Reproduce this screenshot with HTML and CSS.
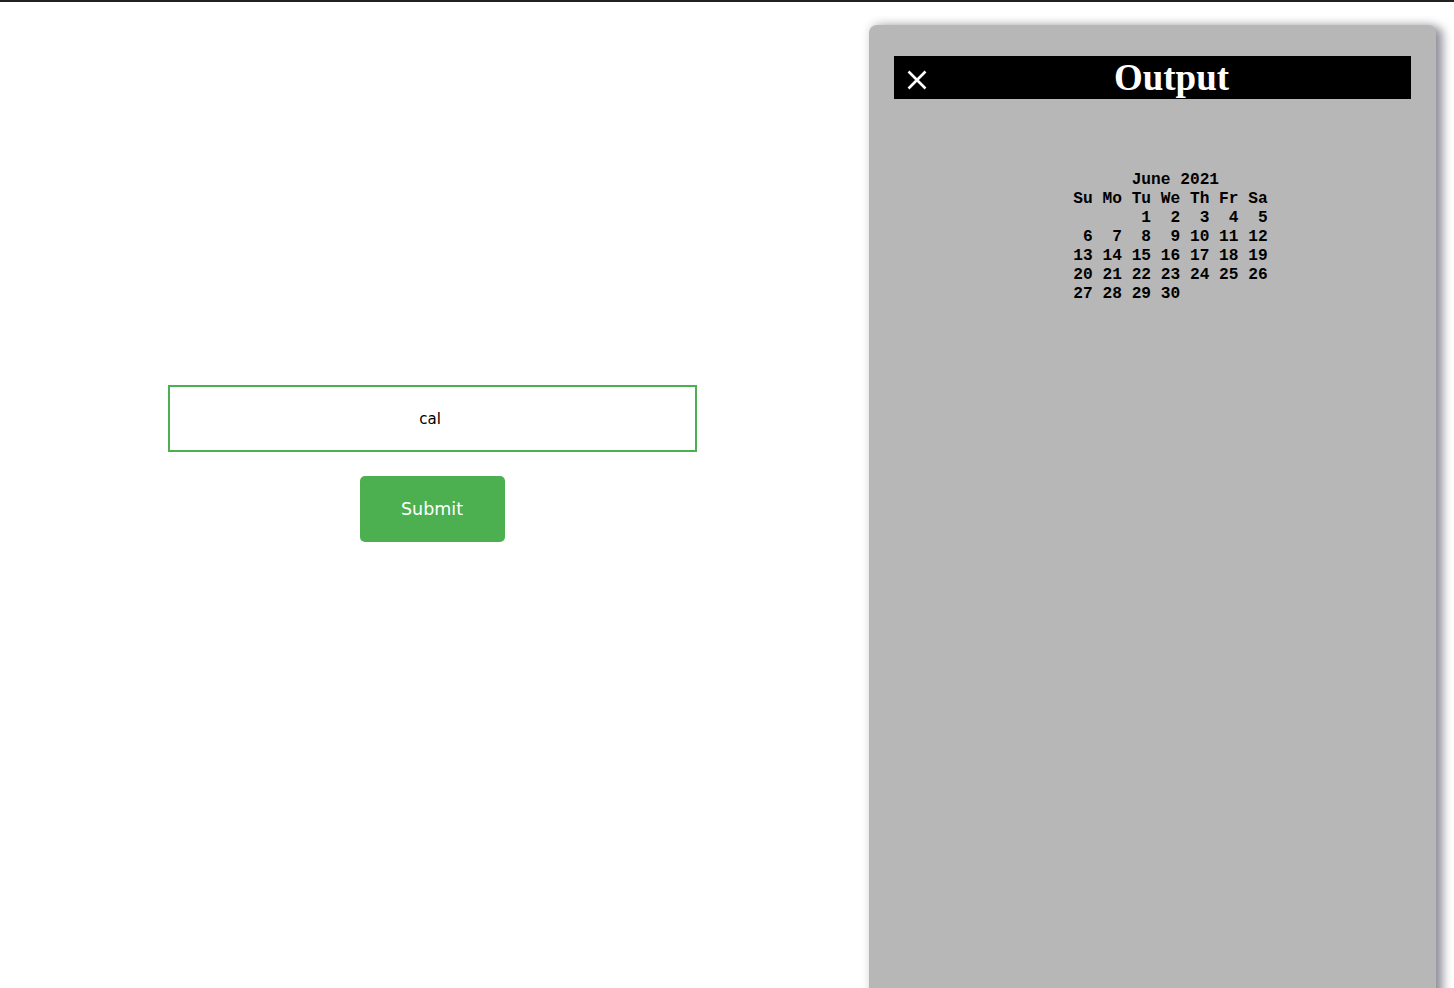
FILE: index.html
```
<!DOCTYPE html>
<html>
<head>
<meta charset="utf-8">
<link rel="stylesheet" href="styles.css">
</head>
<body>
<div class="topline"></div>
<div class="page">
  <div class="left">
    <form class="form">
      <input class="cmd" type="text" value="cal">
      <button class="submit" type="button">Submit</button>
    </form>
  </div>
  <div class="panel">
    <div class="bar">
      <span class="close"><svg width="20" height="20" viewBox="0 0 20 20"><path d="M1.5 1.5 L18.5 18.5 M18.5 1.5 L1.5 18.5" stroke="#fff" stroke-width="2.6" stroke-linecap="butt"/></svg></span>
      <h1 class="title">Output</h1>
    </div>
    <div class="output">
<pre class="cal">      June 2021
Su Mo Tu We Th Fr Sa
       1  2  3  4  5
 6  7  8  9 10 11 12
13 14 15 16 17 18 19
20 21 22 23 24 25 26
27 28 29 30</pre>
    </div>
  </div>
</div>
</body>
</html>
```
FILE: styles.css
```
html, body {
  margin: 0;
  padding: 0;
  background: #fff;
  overflow: hidden;
  height: 988px;
}
.topline {
  height: 2px;
  background: #222;
}
.page {
  display: flex;
  align-items: flex-start;
}
.left {
  flex: 0 0 864px;
  padding-top: 383px;
}
.form {
  display: flex;
  flex-direction: column;
  align-items: center;
  gap: 24px;
  margin: 0;
}
.cmd {
  box-sizing: border-box;
  width: 529px;
  height: 67px;
  border: 2px solid #4caf50;
  outline: none;
  text-align: center;
  font-family: "DejaVu Sans", sans-serif;
  font-size: 15px;
  color: #000;
  padding: 0 10px 0 6px;
  margin: 0;
  background: #fff;
}
.submit {
  width: 145px;
  height: 66px;
  background: #4caf50;
  color: #fff;
  border: none;
  border-radius: 5px;
  font-family: "DejaVu Sans", sans-serif;
  font-size: 17.5px;
  padding: 0;
}
.panel {
  flex: 0 0 567px;
  box-sizing: border-box;
  margin-left: 5px;
  margin-top: 23px;
  height: 1000px;
  background: #b7b7b7;
  border-radius: 8px;
  padding: 31px 25px 0 25px;
  box-shadow: 7px 2px 10px rgba(70, 70, 90, 0.55), 0 -2px 10px rgba(0, 0, 0, 0.12);
}
.bar {
  display: flex;
  align-items: center;
  height: 43px;
  background: #000;
}
.close {
  flex: 0 0 38px;
  box-sizing: border-box;
  display: flex;
  justify-content: flex-start;
  padding-left: 13px;
  padding-top: 4px;
}
.close svg {
  display: block;
}
.title {
  flex: 1;
  margin: 0;
  text-align: center;
  color: #fff;
  font-family: "Liberation Serif", serif;
  font-weight: bold;
  font-size: 37px;
  line-height: 43px;
}
.output {
  padding-left: 36px;
  padding-top: 72px;
  display: flex;
  justify-content: center;
}
.cal {
  margin: 0;
  font-family: "Liberation Mono", monospace;
  font-weight: bold;
  font-size: 16.2px;
  line-height: 19px;
  color: #000;
}
```
